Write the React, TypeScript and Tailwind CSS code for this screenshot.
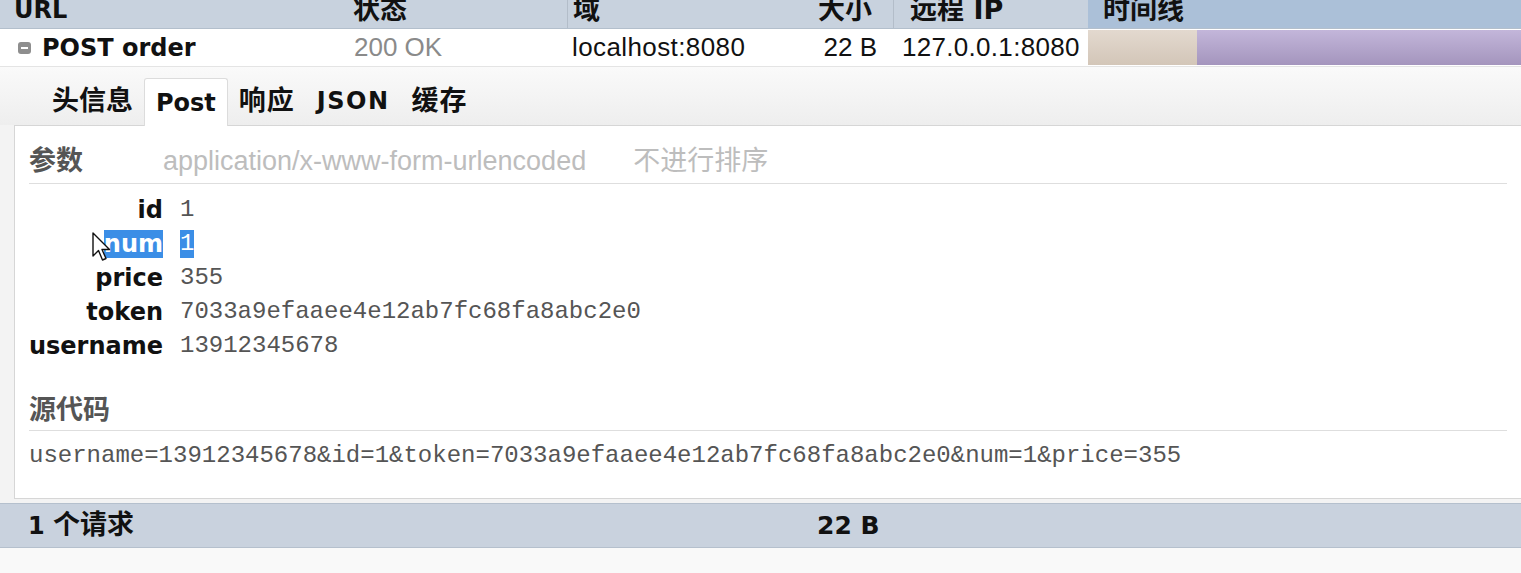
import React from 'react';

const SANS = "font-['Liberation_Sans','Noto_Sans_CJK_SC',sans-serif]";
const BOLD = "font-['DejaVu_Sans','Noto_Sans_CJK_SC',sans-serif] font-bold";
const MONO = "font-['Liberation_Mono','Noto_Sans_CJK_SC',monospace]";

const params = [
  { name: 'id', value: '1' },
  { name: 'num', value: '1', selected: true },
  { name: 'price', value: '355' },
  { name: 'token', value: '7033a9efaaee4e12ab7fc68fa8abc2e0' },
  { name: 'username', value: '13912345678' },
];

const tabs = [
  { label: '头信息', cls: 'text-[27px]' },
  { label: 'Post', cls: 'text-[24px]', active: true },
  { label: '响应', cls: 'text-[27px] tracking-[1px]' },
  { label: 'JSON', cls: 'text-[24px] tracking-[1.5px]' },
  { label: '缓存', cls: 'text-[27px] tracking-[1px]' },
];

const Cursor: React.FC = () => (
  <svg className="absolute left-[92px] top-[232px]" width="20" height="32" viewBox="0 0 20 32">
    <path d="M1 1 L1 24 L6.5 18.5 L10.5 28 L14 26.5 L10 17.5 L17.5 17.5 Z" fill="#fff" stroke="#111" strokeWidth="1.4" strokeLinejoin="round" />
  </svg>
);

const App: React.FC = () => {
  return (
    <div className={`relative w-[1521px] h-[573px] overflow-hidden bg-[#f3f3f3] text-[#111] ${SANS}`}>
      {/* column headers, top half cut off */}
      <div className="flex h-[29px] overflow-hidden bg-[#c8d2de] border-b border-[#b3bfcc]">
        <div className={`w-[340px] pl-[14px] -mt-[2px] text-[24px] leading-[24px] ${BOLD}`}>URL</div>
        <div className={`w-[227px] pl-[13px] -mt-[2px] text-[27px] leading-[24px] ${BOLD}`}>状态</div>
        <div className={`w-[233px] pl-[5px] -mt-[2px] border-l border-[#b3bdc9] text-[27px] leading-[24px] ${BOLD}`}>域</div>
        <div className={`w-[93px] pl-[18px] -mt-[2px] text-[27px] leading-[24px] ${BOLD}`}>大小</div>
        <div className={`w-[195px] pl-[16px] -mt-[2px] border-l border-[#b3bdc9] text-[27px] leading-[24px] ${BOLD}`}>远程 IP</div>
        <div className={`flex-1 pl-[15px] -mt-[2px] bg-[#abc0d8] text-[27px] leading-[24px] ${BOLD}`}>时间线</div>
      </div>

      {/* request row */}
      <div className="flex h-[38px] items-center bg-white border-b border-[#e4e4e4]">
        <div className="w-[340px] flex items-center pl-[18px]">
          <span className="w-[13px] h-[12px] rounded-[3px] bg-[#8e8e8e] flex items-center justify-center">
            <span className="w-[7px] h-[2px] bg-white" />
          </span>
          <span className={`ml-[11px] text-[24px] ${BOLD}`}>POST order</span>
        </div>
        <div className="w-[227px] pl-[14px] text-[26px] text-[#8a8a8a]">200 OK</div>
        <div className="w-[233px] pl-[5px] text-[26px] tracking-[0.4px]">localhost:8080</div>
        <div className="w-[93px] pr-[16px] text-right text-[26px]">22 B</div>
        <div className="w-[195px] pl-[9px] text-[26px] tracking-[0.3px]">127.0.0.1:8080</div>
        <div className="flex-1 flex self-stretch py-[1px]">
          <div className="w-[109px] bg-gradient-to-b from-[#e3d9cf] to-[#d3c6b8]" />
          <div className="flex-1 bg-gradient-to-b from-[#c3b6da] to-[#a495bd]" />
        </div>
      </div>

      {/* tabs */}
      <div className="flex items-end h-[58px] pl-[41px] bg-gradient-to-b from-[#fafafa] to-[#eeeeee]">
        {tabs.map(t => (
          <div
            key={t.label}
            className={`h-[48px] px-[11px] flex items-center ${BOLD} ${t.cls} ${
              t.active ? 'bg-white border border-b-0 border-[#dcdcdc] rounded-t-[3px] relative top-px' : ''
            }`}
          >
            {t.label}
          </div>
        ))}
      </div>

      {/* post panel */}
      <div className="ml-[14px] bg-white border border-r-0 border-[#d6d6d6] px-[14px] pb-[17px]">
        <div className="h-[58px] pt-[14px] flex items-center border-b border-[#dedede]">
          <span className={`w-[134px] text-[27px] text-[#555] ${BOLD}`}>参数</span>
          <span className="text-[27px] text-[#bdbdbd]">application/x-www-form-urlencoded</span>
          <span className="ml-[47px] text-[27px] text-[#bdbdbd]">不进行排序</span>
        </div>

        <div className="mt-[9px]">
          {params.map(p => (
            <div key={p.name} className="flex h-[34px] items-center">
              <div className="w-[134px] flex justify-end">
                <span className={`text-[24px] leading-[28px] ${BOLD} ${p.selected ? 'bg-[#3b8ee6] text-white' : ''}`}>{p.name}</span>
              </div>
              <span className={`ml-[17px] text-[24px] leading-[28px] text-[#555] ${MONO} ${p.selected ? 'bg-[#3b8ee6] text-white' : ''}`}>
                {p.value}
              </span>
            </div>
          ))}
        </div>

        <div className="mt-[28px] h-[40px] flex items-center border-b border-[#dedede]">
          <span className={`text-[27px] text-[#555] ${BOLD}`}>源代码</span>
        </div>
        <div className={`h-[50px] flex items-center text-[24px] text-[#555] ${MONO}`}>
          username=13912345678&amp;id=1&amp;token=7033a9efaaee4e12ab7fc68fa8abc2e0&amp;num=1&amp;price=355
        </div>
      </div>

      {/* status bar */}
      <div className="mt-[4px] h-[45px] flex items-center bg-[#c9d2de] border-t border-b border-[#b5c0cd]">
        <div className={`w-[817px] pl-[28px] text-[24px] ${BOLD}`}>
          1 <span className="text-[27px]">个请求</span>
        </div>
        <div className={`text-[25px] ${BOLD}`}>22 B</div>
      </div>
      <div className="h-[30px] bg-[#f9f9f9]" />

      <Cursor />
    </div>
  );
};

export default App;
